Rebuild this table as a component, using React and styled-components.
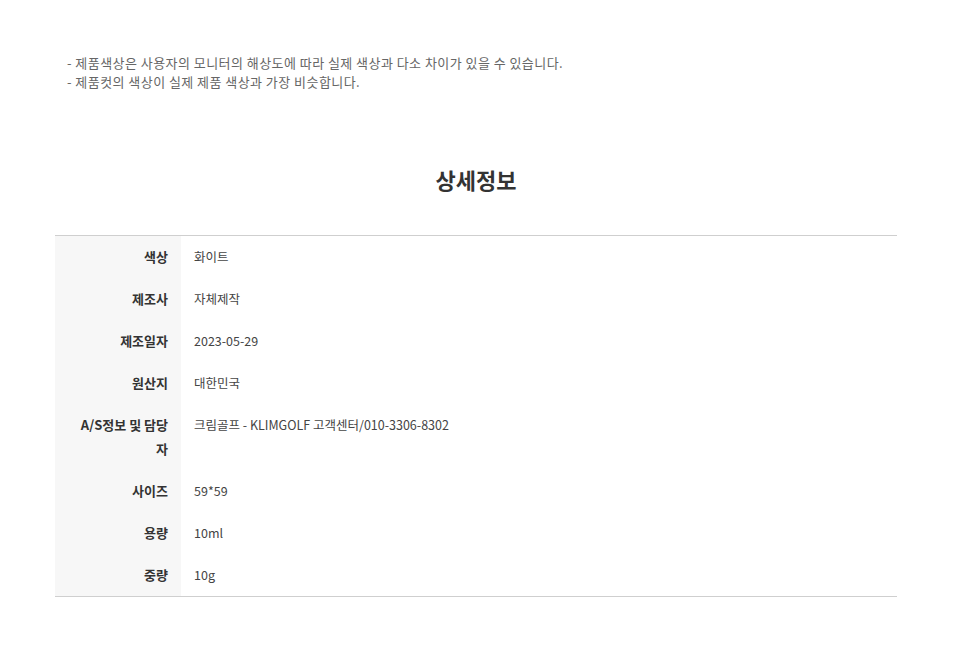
import React from 'react';
import styled, { createGlobalStyle } from 'styled-components';

const rows = [
  { label: '색상', value: '화이트' },
  { label: '제조사', value: '자체제작' },
  { label: '제조일자', value: '2023-05-29' },
  { label: '원산지', value: '대한민국' },
  { label: 'A/S정보 및 담당자', value: '크림골프 - KLIMGOLF 고객센터/010-3306-8302' },
  { label: '사이즈', value: '59*59' },
  { label: '용량', value: '10ml' },
  { label: '중량', value: '10g' },
];

export default function App() {
  return (
    <Page>
      <GlobalStyle />
      <Notice>
        <li>- 제품색상은 사용자의 모니터의 해상도에 따라 실제 색상과 다소 차이가 있을 수 있습니다.</li>
        <li>- 제품컷의 색상이 실제 제품 색상과 가장 비슷합니다.</li>
      </Notice>
      <Title>상세정보</Title>
      <InfoTable>
        <colgroup>
          <col style={{ width: '126px' }} />
          <col />
        </colgroup>
        <tbody>
          {rows.map((r) => (
            <tr key={r.label}>
              <Th>{r.label}</Th>
              <Td>{r.value}</Td>
            </tr>
          ))}
        </tbody>
      </InfoTable>
    </Page>
  );
}

const GlobalStyle = createGlobalStyle`
  body {
    margin: 0;
    background: #fff;
    font-family: "Noto Sans CJK KR", "Noto Sans", sans-serif;
    color: #333;
  }
`;

const Page = styled.div`
  width: 842px;
  margin: 0 0 0 55px;
  padding-top: 53px;
`;

const Notice = styled.ul`
  list-style: none;
  margin: 0;
  padding: 0 0 0 12px;
  font-size: 13px;
  line-height: 19px;
  color: #666;
  letter-spacing: 0.45px;
`;

const Title = styled.h2`
  margin: 73px 0 0;
  text-align: center;
  font-size: 22px;
  line-height: 30px;
  font-weight: 700;
  color: #333;
`;

const InfoTable = styled.table`
  width: 100%;
  margin-top: 41px;
  border-collapse: collapse;
  border-top: 1px solid #cfcfcf;
  border-bottom: 1px solid #cfcfcf;
  table-layout: fixed;
`;

const Th = styled.th`
  padding: 9px 13px 9px 22px;
  background: #f7f7f7;
  text-align: right;
  vertical-align: top;
  font-size: 13px;
  line-height: 24px;
  font-weight: 700;
  color: #333;
  word-break: break-all;
`;

const Td = styled.td`
  padding: 9px 13px;
  text-align: left;
  vertical-align: top;
  font-size: 12.5px;
  line-height: 24px;
  color: #444;
`;
